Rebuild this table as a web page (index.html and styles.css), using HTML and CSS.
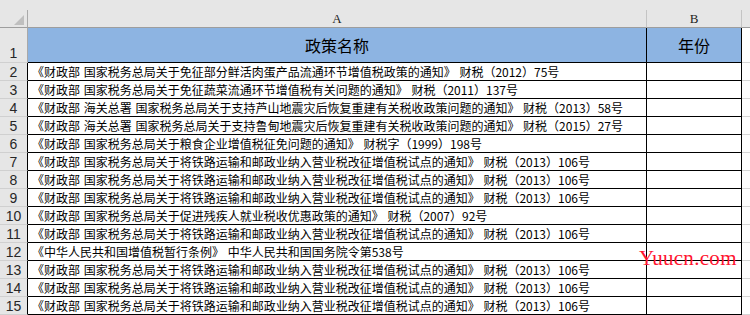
FILE: index.html
```html
<!DOCTYPE html>
<html lang="zh-CN">
<head>
<meta charset="utf-8">
<title>政策名称</title>
<link rel="stylesheet" href="styles.css">
</head>
<body>
<div class="sheet">
  <div class="topstrip"></div>

  <div class="corner"><span class="tri"></span></div>
  <div class="colhead">A</div>
  <div class="colhead">B</div>
  <div class="colhead extra-head"></div>

  <div class="rowhead first">1</div>
  <div class="cell title">政策名称</div>
  <div class="cell title">年份</div>
  <div class="extra"></div>

  <div class="rowhead">2</div>
  <div class="cell">《财政部 国家税务总局关于免征部分鲜活肉蛋产品流通环节增值税政策的通知》 财税（2012）75号</div>
  <div class="cell"></div>
  <div class="extra"></div>

  <div class="rowhead">3</div>
  <div class="cell">《财政部 国家税务总局关于免征蔬菜流通环节增值税有关问题的通知》 财税（2011）137号</div>
  <div class="cell"></div>
  <div class="extra"></div>

  <div class="rowhead">4</div>
  <div class="cell">《财政部 海关总署 国家税务总局关于支持芦山地震灾后恢复重建有关税收政策问题的通知》 财税（2013）58号</div>
  <div class="cell"></div>
  <div class="extra"></div>

  <div class="rowhead">5</div>
  <div class="cell">《财政部 海关总署 国家税务总局关于支持鲁甸地震灾后恢复重建有关税收政策问题的通知》 财税（2015）27号</div>
  <div class="cell"></div>
  <div class="extra"></div>

  <div class="rowhead">6</div>
  <div class="cell">《财政部 国家税务总局关于粮食企业增值税征免问题的通知》 财税字（1999）198号</div>
  <div class="cell"></div>
  <div class="extra"></div>

  <div class="rowhead">7</div>
  <div class="cell">《财政部 国家税务总局关于将铁路运输和邮政业纳入营业税改征增值税试点的通知》 财税（2013）106号</div>
  <div class="cell"></div>
  <div class="extra"></div>

  <div class="rowhead">8</div>
  <div class="cell">《财政部 国家税务总局关于将铁路运输和邮政业纳入营业税改征增值税试点的通知》 财税（2013）106号</div>
  <div class="cell"></div>
  <div class="extra"></div>

  <div class="rowhead">9</div>
  <div class="cell">《财政部 国家税务总局关于将铁路运输和邮政业纳入营业税改征增值税试点的通知》 财税（2013）106号</div>
  <div class="cell"></div>
  <div class="extra"></div>

  <div class="rowhead">10</div>
  <div class="cell">《财政部 国家税务总局关于促进残疾人就业税收优惠政策的通知》 财税（2007）92号</div>
  <div class="cell"></div>
  <div class="extra"></div>

  <div class="rowhead">11</div>
  <div class="cell">《财政部 国家税务总局关于将铁路运输和邮政业纳入营业税改征增值税试点的通知》 财税（2013）106号</div>
  <div class="cell"></div>
  <div class="extra"></div>

  <div class="rowhead">12</div>
  <div class="cell">《中华人民共和国增值税暂行条例》 中华人民共和国国务院令第538号</div>
  <div class="cell"></div>
  <div class="extra"></div>

  <div class="rowhead">13</div>
  <div class="cell">《财政部 国家税务总局关于将铁路运输和邮政业纳入营业税改征增值税试点的通知》 财税（2013）106号</div>
  <div class="cell"></div>
  <div class="extra"></div>

  <div class="rowhead">14</div>
  <div class="cell">《财政部 国家税务总局关于将铁路运输和邮政业纳入营业税改征增值税试点的通知》 财税（2013）106号</div>
  <div class="cell"></div>
  <div class="extra"></div>

  <div class="rowhead">15</div>
  <div class="cell">《财政部 国家税务总局关于将铁路运输和邮政业纳入营业税改征增值税试点的通知》 财税（2013）106号</div>
  <div class="cell"></div>
  <div class="extra"></div>

  <div class="watermark">Yuucn.com</div>
</div>
</body>
</html>
```

FILE: styles.css
```css
html, body {
  margin: 0;
  padding: 0;
  background: #ffffff;
  overflow: hidden;
}

.sheet {
  position: relative;
  width: 750px;
  height: 315px;
  display: grid;
  grid-template-columns: 28px 619px 95px 1fr;
  grid-template-rows: 10px 18px 35px repeat(14, 18px);
  font-family: "Noto Sans CJK SC", "Noto Sans", sans-serif;
  color: #000;
}

.topstrip {
  grid-column: 1 / -1;
  background: #e6e6e6;
}

.corner {
  position: relative;
  background: #e6e6e6;
  border-right: 1px solid #a9a9a9;
  border-bottom: 1px solid #9e9e9e;
}

.tri {
  position: absolute;
  right: 3px;
  bottom: 2px;
  width: 0;
  height: 0;
  border-left: 10px solid transparent;
  border-bottom: 10px solid #bfbfbf;
}

.colhead {
  background: #e6e6e6;
  border-right: 1px solid #c4c4c4;
  border-bottom: 1px solid #9e9e9e;
  display: flex;
  align-items: flex-end;
  justify-content: center;
  font-family: "Liberation Serif", serif;
  font-size: 13px;
  line-height: 15px;
  color: #222;
  padding-bottom: 1px;
  box-sizing: border-box;
}

.extra-head {
  border-right: none;
}

.rowhead {
  background: #e6e6e6;
  border-right: 1px solid #000;
  border-bottom: 1px solid #d0d0d0;
  display: flex;
  align-items: flex-end;
  justify-content: center;
  font-family: "Liberation Sans", Arial, sans-serif;
  font-size: 14px;
  line-height: 16px;
  color: #262626;
  box-sizing: border-box;
}

.rowhead.first {
  border-right-color: #a9a9a9;
  padding-bottom: 1px;
}

.cell {
  border-right: 1px solid #000;
  border-bottom: 1px solid #000;
  box-sizing: border-box;
  font-size: 12px;
  line-height: 17px;
  padding: 0 0 0 4px;
  white-space: nowrap;
  overflow: hidden;
  word-spacing: 1px;
}

.cell.title {
  background: #8db4e2;
  font-size: 16px;
  line-height: 20px;
  display: flex;
  align-items: center;
  justify-content: center;
  padding: 0;
  word-spacing: 0;
}

.extra {
  border-bottom: 1px solid #d6d6d6;
  box-sizing: border-box;
}

.watermark {
  position: absolute;
  left: 639px;
  top: 248px;
  font-family: "Liberation Serif", "Times New Roman", serif;
  font-size: 21px;
  line-height: 21px;
  letter-spacing: 0.3px;
  color: #ff1430;
  white-space: nowrap;
}
```
